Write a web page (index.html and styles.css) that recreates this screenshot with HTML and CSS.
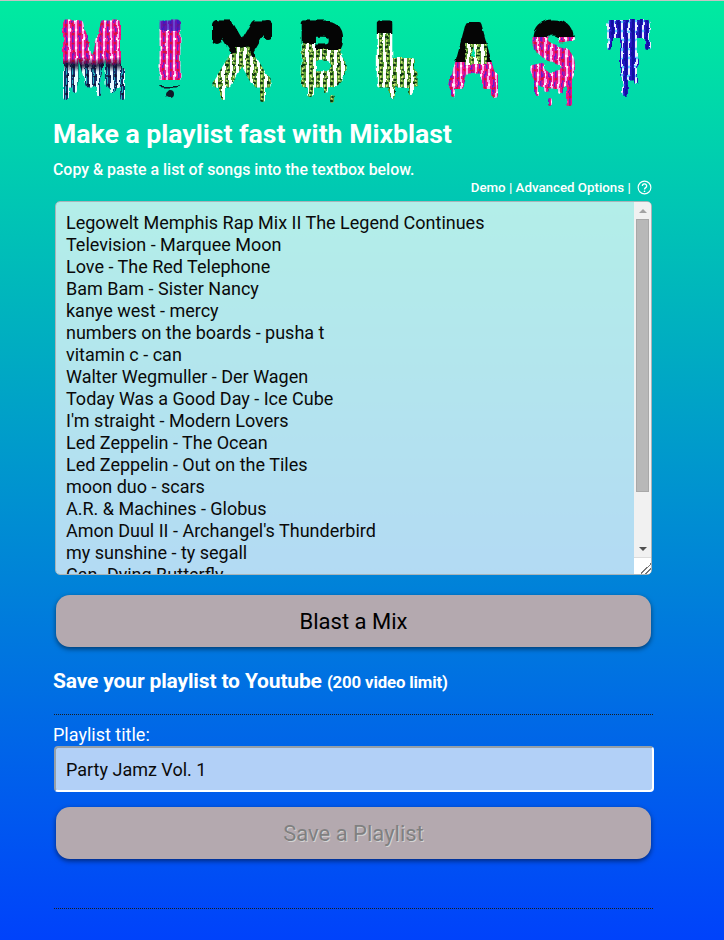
FILE: index.html
```html
<!DOCTYPE html>
<html lang="en">
<head>
  <meta charset="UTF-8">
  <title>Mixblast</title>
  <link rel="stylesheet" href="styles.css">
</head>
<body>
  <div class="page">
    <svg class="logo" viewBox="0 0 600 90" width="600" height="90" role="img" aria-label="Mixblast">
      <defs>
        <pattern id="pink" width="7" height="9" patternUnits="userSpaceOnUse">
          <rect width="7" height="9" fill="#f0128c"/>
          <rect x="0" width="2" height="9" fill="#f8b0ea"/>
          <rect x="4" width="1.5" height="9" fill="#6a1cc8"/>
          <circle cx="1" cy="3" r="1.4" fill="#fff4fd"/>
          <circle cx="5" cy="7" r="1.5" fill="#d81038"/>
        </pattern>
        <pattern id="cyan" width="7" height="9" patternUnits="userSpaceOnUse">
          <rect width="7" height="9" fill="#14306a"/>
          <rect x="0" width="3" height="9" fill="#e8fbff"/>
          <rect x="4" width="1" height="9" fill="#20b0c0"/>
          <circle cx="5.5" cy="4" r="1.4" fill="#101030"/>
        </pattern>
        <pattern id="green" width="7" height="9" patternUnits="userSpaceOnUse">
          <rect width="7" height="9" fill="#58a030"/>
          <rect x="0" width="3" height="9" fill="#ffffff"/>
          <rect x="4" width="1.5" height="9" fill="#d8ec80"/>
          <circle cx="4.5" cy="2" r="1.6" fill="#0a3410"/>
          <circle cx="5.5" cy="7" r="1.3" fill="#124018"/>
        </pattern>
        <pattern id="blue" width="7" height="9" patternUnits="userSpaceOnUse">
          <rect width="7" height="9" fill="#2414c0"/>
          <rect x="0" width="2" height="9" fill="#e8ecff"/>
          <rect x="4" width="2" height="9" fill="#1010a0"/>
          <circle cx="1" cy="4" r="1.4" fill="#60d0ff"/>
        </pattern>
        <linearGradient id="band" x1="0" y1="0" x2="0" y2="1">
          <stop offset="0" stop-color="#101030" stop-opacity="0"/>
          <stop offset="0.5" stop-color="#101030" stop-opacity="0.85"/>
          <stop offset="1" stop-color="#101030" stop-opacity="0"/>
        </linearGradient>

        <mask id="mask-m" maskUnits="userSpaceOnUse" x="0" y="0" width="600" height="90">
          <text class="logo-letter" x="7" y="66" textLength="62" lengthAdjust="spacingAndGlyphs">M</text>
          <rect x="9" y="50" width="6" height="32" rx="3"/>
          <rect x="18" y="50" width="5" height="25" rx="2.5"/>
          <rect x="42" y="50" width="5" height="28" rx="2.5"/>
          <rect x="56" y="50" width="6" height="24" rx="3"/>
          <rect x="66" y="50" width="5" height="32" rx="2.5"/>
        </mask>
        <mask id="mask-i" maskUnits="userSpaceOnUse" x="0" y="0" width="600" height="90">
          <text class="logo-letter" x="103" y="66" textLength="26" lengthAdjust="spacingAndGlyphs">I</text>
          <circle cx="116" cy="76" r="4"/>
        </mask>
        <mask id="mask-x" maskUnits="userSpaceOnUse" x="0" y="0" width="600" height="90">
          <text class="logo-letter" x="161" y="66" textLength="54" lengthAdjust="spacingAndGlyphs">X</text>
          <rect x="166" y="55" width="5" height="27" rx="2.5"/>
          <rect x="206" y="55" width="5" height="29" rx="2.5"/>
          <rect x="158" y="2" width="10" height="24" rx="5"/>
          <rect x="210" y="2" width="8" height="20" rx="4"/>
        </mask>
        <mask id="mask-b" maskUnits="userSpaceOnUse" x="0" y="0" width="600" height="90">
          <text class="logo-letter" x="246" y="66" textLength="46" lengthAdjust="spacingAndGlyphs">B</text>
          <rect x="254" y="55" width="6" height="24" rx="3"/>
          <rect x="270" y="55" width="4" height="20" rx="2"/>
          <rect x="276" y="77" width="4" height="8" rx="2"/>
        </mask>
        <mask id="mask-l" maskUnits="userSpaceOnUse" x="0" y="0" width="600" height="90">
          <text class="logo-letter" x="321" y="66" textLength="42" lengthAdjust="spacingAndGlyphs">L</text>
          <rect x="324" y="40" width="37" height="28" rx="3"/>
          <rect x="335" y="55" width="6" height="25" rx="3"/>
          <rect x="355" y="55" width="5" height="21" rx="2.5"/>
        </mask>
        <mask id="mask-a" maskUnits="userSpaceOnUse" x="0" y="0" width="600" height="90">
          <text class="logo-letter" x="396" y="67" textLength="47" lengthAdjust="spacingAndGlyphs">A</text>
          <rect x="396" y="55" width="5" height="25" rx="2.5"/>
          <rect x="437" y="55" width="7" height="25" rx="3.5"/>
        </mask>
        <mask id="mask-s" maskUnits="userSpaceOnUse" x="0" y="0" width="600" height="90">
          <text class="logo-letter" x="477" y="66" textLength="44" lengthAdjust="spacingAndGlyphs">S</text>
          <rect x="480" y="55" width="5" height="23" rx="2.5"/>
          <rect x="490" y="55" width="5" height="19" rx="2.5"/>
          <rect x="504" y="55" width="5" height="21" rx="2.5"/>
          <rect x="513" y="55" width="5" height="33" rx="2.5"/>
          <rect x="494" y="80" width="4" height="8" rx="2"/>
        </mask>
        <mask id="mask-t" maskUnits="userSpaceOnUse" x="0" y="0" width="600" height="90">
          <text class="logo-letter logo-letter-t" x="556" y="58" textLength="37" lengthAdjust="spacingAndGlyphs">T</text>
          <rect x="553" y="4" width="43" height="16" rx="3"/>
          <rect x="553" y="10" width="5" height="22" rx="2.5"/>
          <rect x="591" y="10" width="5" height="22" rx="2.5"/>
          <rect x="566" y="14" width="17" height="46" rx="3"/>
          <rect x="568" y="40" width="6" height="38" rx="3"/>
          <rect x="580" y="40" width="4" height="26" rx="2"/>
        </mask>
        <filter id="soft" x="-2%" y="-5%" width="104%" height="110%" color-interpolation-filters="sRGB">
          <feTurbulence type="fractalNoise" baseFrequency="0.11" numOctaves="2" seed="7" result="noise"/>
          <feDisplacementMap in="SourceGraphic" in2="noise" scale="4" xChannelSelector="R" yChannelSelector="G" result="wobble"/>
          <feGaussianBlur in="wobble" stdDeviation="0.55"/>
        </filter>
      </defs>

      <g filter="url(#soft)">
        <g mask="url(#mask-m)">
          <rect width="90" height="50" fill="url(#pink)"/>
          <rect y="46" width="90" height="44" fill="url(#cyan)"/>
          <rect y="40" width="90" height="14" fill="url(#band)"/>
        </g>
        <g mask="url(#mask-i)">
          <rect x="95" width="40" height="62" fill="url(#pink)"/>
          <rect x="95" width="40" height="12" fill="#2a18c0" opacity="0.7"/>
          <rect x="95" y="68" width="40" height="22" fill="#101828"/>
        </g>
        <g mask="url(#mask-x)">
          <rect x="150" y="26" width="75" height="64" fill="url(#green)"/>
          <rect x="150" width="75" height="29" fill="#050505"/>
          <rect x="174" y="26" width="7" height="10" rx="3" fill="#050505"/>
          <rect x="196" y="26" width="7" height="13" rx="3" fill="#050505"/>
        </g>
        <g mask="url(#mask-b)">
          <rect x="240" y="22" width="60" height="68" fill="url(#green)"/>
          <rect x="240" width="60" height="25" fill="#050505"/>
          <rect x="262" y="22" width="30" height="9" fill="#050505"/>
        </g>
        <g mask="url(#mask-l)">
          <rect x="318" y="15" width="50" height="75" fill="url(#green)"/>
          <rect x="318" width="50" height="15" fill="#050505"/>
        </g>
        <g mask="url(#mask-a)">
          <rect x="390" y="40" width="60" height="50" fill="url(#pink)"/>
          <rect x="390" width="60" height="44" fill="#050505"/>
          <rect x="411" y="26" width="22" height="20" fill="url(#green)"/>
        </g>
        <g mask="url(#mask-s)">
          <rect x="470" y="18" width="56" height="72" fill="url(#pink)"/>
          <rect x="470" width="56" height="19" fill="#050505"/>
        </g>
        <g mask="url(#mask-t)">
          <rect x="548" width="52" height="90" fill="url(#blue)"/>
        </g>
      </g>
    </svg>

    <h1 class="title">Make a playlist fast with Mixblast</h1>
    <p class="intro">Copy &amp; paste a list of songs into the textbox below.</p>

    <div class="options">
      <a href="#">Demo</a> | <a href="#">Advanced Options</a> |
      <svg class="help" viewBox="0 0 16 16" width="15" height="15">
        <circle cx="8" cy="8" r="6.8" fill="none" stroke="#fff" stroke-width="1.2"/>
        <path d="M5.7 6.3a2.3 2.2 0 1 1 3.6 1.8c-.9.6-1.3 1-1.3 2" fill="none" stroke="#fff" stroke-width="1.4"/>
        <circle cx="8" cy="12" r=".9" fill="#fff"/>
      </svg>
    </div>

    <div class="songs-wrap">
      <textarea class="songs" spellcheck="false">Legowelt Memphis Rap Mix II The Legend Continues
Television - Marquee Moon
Love - The Red Telephone
Bam Bam - Sister Nancy
kanye west - mercy
numbers on the boards - pusha t
vitamin c - can
Walter Wegmuller - Der Wagen
Today Was a Good Day - Ice Cube
I'm straight - Modern Lovers
Led Zeppelin - The Ocean
Led Zeppelin - Out on the Tiles
moon duo - scars
A.R. &amp; Machines - Globus
Amon Duul II - Archangel's Thunderbird
my sunshine - ty segall
Can- Dying Butterfly
Neu! - Hallogallo
Faust - Jennifer</textarea>
      <div class="scrollbar">
        <div class="scroll-btn"><span class="arrow-up"></span></div>
        <div class="scroll-track"><div class="scroll-thumb"></div></div>
        <div class="scroll-btn"><span class="arrow-down"></span></div>
        <div class="scroll-corner"></div>
      </div>
    </div>

    <button class="btn btn-blast">Blast a Mix</button>

    <h2 class="save-title">Save your playlist to Youtube <small>(200 video limit)</small></h2>
    <hr class="rule">

    <label class="field-label" for="playlist">Playlist title:</label>
    <input class="field" id="playlist" type="text" value="Party Jamz Vol. 1">

    <button class="btn btn-save" disabled>Save a Playlist</button>

    <hr class="rule rule-bottom">
  </div>
</body>
</html>
```

FILE: styles.css
```css
html {
  height: 100%;
}

body {
  margin: 0;
  height: 940px;
  overflow: hidden;
  box-sizing: border-box;
  border-top: 1px solid #c4c4c4;
  font-family: Roboto, Arial, sans-serif;
  color: #fff;
  background: linear-gradient(to bottom, #00eba0 0%, #0042fb 100%);
}

.page {
  width: 600px;
  margin-left: 54px;
  display: flex;
  flex-direction: column;
}

.logo {
  display: block;
  margin-top: 17px;
}

.logo mask text,
.logo mask rect,
.logo mask circle {
  fill: #fff;
}

.logo-letter {
  font-family: "Liberation Sans", Arial, sans-serif;
  font-weight: 700;
  font-size: 88px;
  stroke: #fff;
  stroke-width: 7px;
  stroke-linejoin: round;
}

.logo-letter-t {
  font-size: 76px;
}

.title {
  margin: 10px 0 0 -1px;
  font-size: 26.6px;
  line-height: 32px;
  font-weight: 700;
}

.intro {
  margin: 10px 0 0 -1px;
  font-size: 15.9px;
  line-height: 20px;
  font-weight: 500;
}

.options {
  height: 15px;
  margin-right: 2px;
  text-align: right;
  font-size: 13.3px;
  line-height: 15px;
  font-weight: 500;
  white-space: nowrap;
}

.options a {
  color: #fff;
  text-decoration: none;
}

.help {
  margin-left: 3px;
  vertical-align: -3px;
}

.songs-wrap {
  position: relative;
  width: 597px;
  height: 374px;
  margin: 6px 0 0 1px;
}

.songs {
  display: block;
  box-sizing: border-box;
  width: 100%;
  height: 100%;
  padding: 10px 10px;
  border: 1px solid #a9b4b8;
  border-radius: 5px;
  font-family: Roboto, Arial, sans-serif;
  font-size: 18px;
  line-height: 22px;
  color: #0a0a0a;
  background: rgba(255, 255, 255, 0.7);
  outline: none;
  resize: none;
}

/* headless chrome hides the real scrollbar, so it is drawn over the textarea */
.scrollbar {
  position: absolute;
  top: 1px;
  right: 1px;
  bottom: 1px;
  width: 17px;
  display: flex;
  flex-direction: column;
  background: #f1f1f1;
  border-radius: 0 4px 4px 0;
  overflow: hidden;
}

.scroll-btn {
  height: 17px;
  flex: none;
  display: flex;
  align-items: center;
  justify-content: center;
}

.arrow-up,
.arrow-down {
  width: 0;
  height: 0;
  border-left: 4px solid transparent;
  border-right: 4px solid transparent;
}

.arrow-up {
  border-bottom: 4px solid #a3a3a3;
}

.arrow-down {
  border-top: 4px solid #505050;
}

.scroll-track {
  flex: 1;
  padding: 0 2px;
}

.scroll-thumb {
  box-sizing: border-box;
  height: 273px;
  background: #b8b8b8;
  border: 1px solid #a8a8a8;
}

.scroll-corner {
  box-sizing: border-box;
  height: 17px;
  flex: none;
  border-top: 1px solid #dcdcdc;
  background-color: #fff;
  background-image: linear-gradient(135deg, transparent 50%, #777 50% 56%, transparent 56% 72%, #777 72% 78%, transparent 78%);
  background-size: 11px 11px;
  background-position: right bottom;
  background-repeat: no-repeat;
}

.btn {
  display: block;
  width: 595px;
  height: 52px;
  margin-left: 2px;
  border: none;
  border-radius: 14px;
  font-family: Roboto, Arial, sans-serif;
  font-size: 22px;
  color: #000;
  background: #b4a9af;
  box-shadow: 0 2px 5px rgba(0, 0, 0, 0.5);
}

.btn-blast {
  margin-top: 20px;
}

.save-title {
  margin: 20px 0 0 -1px;
  font-size: 21px;
  line-height: 28px;
  font-weight: 700;
  letter-spacing: -0.15px;
}

.save-title small {
  font-size: 16.8px;
  font-weight: 700;
}

.rule {
  width: 100%;
  height: 1px;
  margin: 18px 0 0;
  border: none;
  background: repeating-linear-gradient(to right, #1c1c1c 0 1px, transparent 1px 2px);
}

.field-label {
  margin: 9px 0 0 -1px;
  font-size: 18px;
  line-height: 22px;
}

.field {
  box-sizing: border-box;
  width: 600px;
  height: 46px;
  padding: 0 10px;
  border: 2px solid;
  border-color: #96a0a8 #fff #fff #96a0a8;
  border-radius: 4px;
  font-family: Roboto, Arial, sans-serif;
  font-size: 18px;
  color: #0a0a0a;
  background: #b2d0f7;
  outline: none;
}

.btn-save {
  margin-top: 15px;
  color: #808080;
  text-shadow: 1px 1px 0 #d4d4d4;
}

.rule-bottom {
  margin-top: 49px;
}
```
